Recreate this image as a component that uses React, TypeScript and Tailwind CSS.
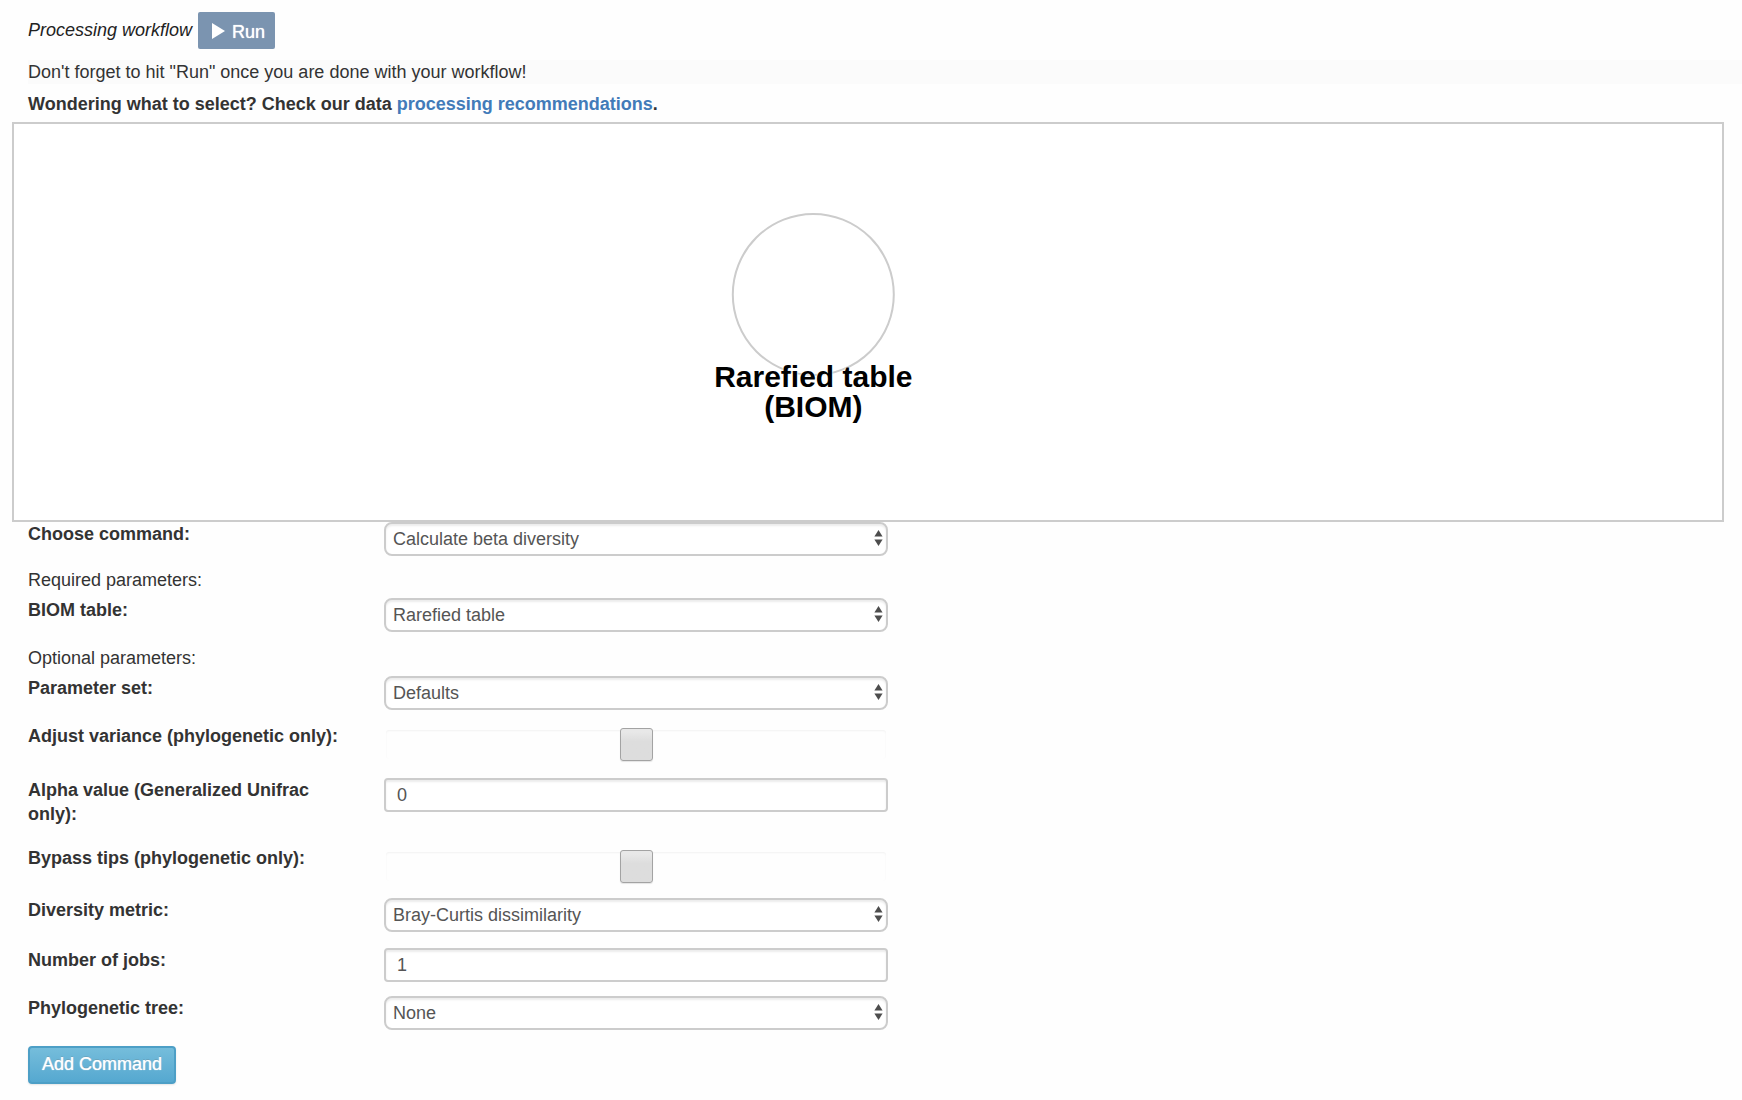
import React, { useId, useState } from "react";

const rowClass = "grid grid-cols-[356fr_504fr_854fr] items-start";
const labelClass = "pr-10 font-bold";
const controlClass =
  "block h-[34px] w-full appearance-none border-2 border-[#cccccc] bg-white text-[#555555] shadow-[inset_0_2px_2px_rgba(0,0,0,0.075)] outline-none focus:border-[#66afe9]";

function Arrows() {
  return (
    <svg className="pointer-events-none absolute top-2 right-[5px] h-4 w-[9px]" viewBox="0 0 9 16" fill="#4d4d4d" aria-hidden="true">
      <path d="M4.5 0 8.6 6.6H0.4Z" />
      <path d="M4.5 16 0.4 9.6H8.6Z" />
    </svg>
  );
}

function SelectRow({ label, options }: { label: string; options: string[] }) {
  const id = useId();
  return (
    <div className={rowClass}>
      <label htmlFor={id} className={labelClass}>{label}</label>
      <div className="relative">
        <select id={id} className={`${controlClass} rounded-lg pr-6 pl-[7px]`}>
          {options.map((o) => (
            <option key={o}>{o}</option>
          ))}
        </select>
        <Arrows />
      </div>
    </div>
  );
}

function InputRow({ label, initial }: { label: string; initial: string }) {
  const id = useId();
  const [value, setValue] = useState(initial);
  return (
    <div className={rowClass}>
      <label htmlFor={id} className={labelClass}>{label}</label>
      <input
        id={id}
        type="text"
        value={value}
        onChange={(e) => setValue(e.target.value)}
        className={`${controlClass} rounded-[4px] px-[11px]`}
      />
    </div>
  );
}

function CheckRow({ label }: { label: string }) {
  const id = useId();
  return (
    <div className={rowClass}>
      <label htmlFor={id} className={labelClass}>{label}</label>
      <div className="mx-[2px] mt-[6px] mb-px flex h-[29px] items-center justify-center rounded-[3px] shadow-[inset_0_1px_2px_rgba(0,0,0,0.05)]">
        <input
          id={id}
          type="checkbox"
          className="size-[33px] shrink-0 appearance-none rounded-[3px] border border-[#a3a3a3] bg-linear-to-b from-[#e8e8e8] from-10% to-[#dddddd] to-40% shadow-[0_1px_1px_rgba(0,0,0,0.1)] checked:bg-[#9bc4dd]"
        />
      </div>
    </div>
  );
}

export default function App() {
  return (
    <main className="min-h-screen bg-[#fefefe] pt-3 pb-4 font-['Liberation_Sans',Arial,sans-serif] text-[18px] leading-6 text-[#333333]">
      <header className="pl-7">
        <div className="flex items-start gap-[6px]">
          <i className="pt-[6px] text-[#222222]">Processing workflow</i>
          <button type="button" className="flex h-[37px] items-center gap-[7px] rounded-[2px] bg-[#7b94b0] pr-[10px] pl-[14px] text-white [text-shadow:0_0_1px_#fff]">
            <svg className="h-4 w-[13px]" viewBox="0 0 13 16" fill="currentColor" aria-hidden="true">
              <path d="M0 0 13 8 0 16Z" />
            </svg>
            <span className="pt-[3px]">Run</span>
          </button>
        </div>
        <p className="mt-[11px] bg-[#fbfbfb]">Don't forget to hit "Run" once you are done with your workflow!</p>
        <p className="mt-2 font-bold">
          Wondering what to select? Check our data{" "}
          <a href="#recommendations" className="text-[#427bb9]">processing recommendations</a>.
        </p>
      </header>

      <section aria-label="Workflow graph" className="relative mt-[6px] mr-[18px] ml-3 h-[400px] border-2 border-[#cccccc] bg-white">
        <div className="absolute top-[89px] left-[46.8%] flex -translate-x-1/2 flex-col items-center">
          <div className="size-[163px] rounded-full border-2 border-[#cccccc]" />
          <div className="-mt-[14px] text-center text-[30px] leading-[30px] font-bold whitespace-nowrap text-black [text-shadow:0_0_2px_#fff,0_0_2px_#fff]">
            Rarefied table
            <br />
            (BIOM)
          </div>
        </div>
      </section>

      <form className="pl-7" onSubmit={(e) => e.preventDefault()}>
        <SelectRow label="Choose command:" options={["Calculate beta diversity"]} />
        <p className="mt-3 mb-[6px]">Required parameters:</p>
        <SelectRow label="BIOM table:" options={["Rarefied table"]} />
        <p className="mt-[14px] mb-[6px]">Optional parameters:</p>
        <SelectRow label="Parameter set:" options={["Defaults"]} />
        <div className="mt-[14px]">
          <CheckRow label="Adjust variance (phylogenetic only):" />
        </div>
        <div className="mt-[18px]">
          <InputRow label="Alpha value (Generalized Unifrac only):" initial="0" />
        </div>
        <div className="mt-5">
          <CheckRow label="Bypass tips (phylogenetic only):" />
        </div>
        <div className="mt-4">
          <SelectRow label="Diversity metric:" options={["Bray-Curtis dissimilarity"]} />
        </div>
        <div className="mt-4">
          <InputRow label="Number of jobs:" initial="1" />
        </div>
        <div className="mt-[14px]">
          <SelectRow label="Phylogenetic tree:" options={["None"]} />
        </div>
        <button
          type="submit"
          className="mt-4 block h-[38px] rounded-[4px] border-2 border-[#4d9fc6] bg-linear-to-b from-[#75bddb] to-[#55a8d0] px-3 pb-[2px] text-white shadow-[0_1px_2px_rgba(0,0,0,0.1)] [text-shadow:0_-1px_0_rgba(0,0,0,0.15),0_0_1px_#fff]"
        >
          Add Command
        </button>
      </form>
    </main>
  );
}
